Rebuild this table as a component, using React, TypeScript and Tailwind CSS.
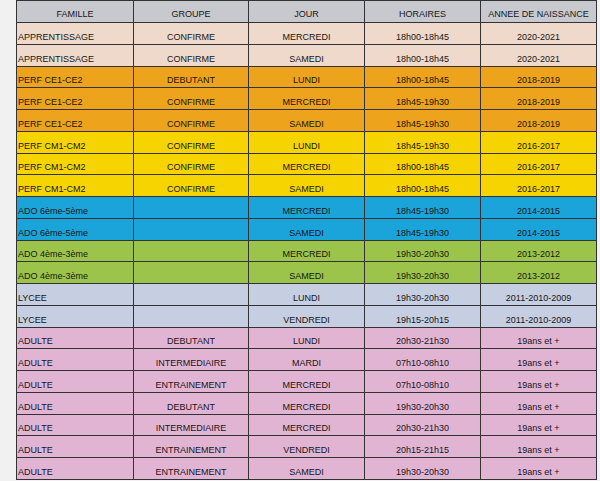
const COLORS: Record<string, string> = {
  peach: 'bg-[#efd9ca]',
  orange: 'bg-[#eea31c]',
  yellow: 'bg-[#f6d402]',
  blue: 'bg-[#1ba4da]',
  green: 'bg-[#9cc44b]',
  lavender: 'bg-[#c6cee1]',
  pink: 'bg-[#e2b4d4]',
}

const ROWS = [
  ['APPRENTISSAGE', 'CONFIRME', 'MERCREDI', '18h00-18h45', '2020-2021', 'peach'],
  ['APPRENTISSAGE', 'CONFIRME', 'SAMEDI', '18h00-18h45', '2020-2021', 'peach'],
  ['PERF CE1-CE2', 'DEBUTANT', 'LUNDI', '18h00-18h45', '2018-2019', 'orange'],
  ['PERF CE1-CE2', 'CONFIRME', 'MERCREDI', '18h45-19h30', '2018-2019', 'orange'],
  ['PERF CE1-CE2', 'CONFIRME', 'SAMEDI', '18h45-19h30', '2018-2019', 'orange'],
  ['PERF CM1-CM2', 'CONFIRME', 'LUNDI', '18h45-19h30', '2016-2017', 'yellow'],
  ['PERF CM1-CM2', 'CONFIRME', 'MERCREDI', '18h00-18h45', '2016-2017', 'yellow'],
  ['PERF CM1-CM2', 'CONFIRME', 'SAMEDI', '18h00-18h45', '2016-2017', 'yellow'],
  ['ADO 6ème-5ème', '', 'MERCREDI', '18h45-19h30', '2014-2015', 'blue'],
  ['ADO 6ème-5ème', '', 'SAMEDI', '18h45-19h30', '2014-2015', 'blue'],
  ['ADO 4ème-3ème', '', 'MERCREDI', '19h30-20h30', '2013-2012', 'green'],
  ['ADO 4ème-3ème', '', 'SAMEDI', '19h30-20h30', '2013-2012', 'green'],
  ['LYCEE', '', 'LUNDI', '19h30-20h30', '2011-2010-2009', 'lavender'],
  ['LYCEE', '', 'VENDREDI', '19h15-20h15', '2011-2010-2009', 'lavender'],
  ['ADULTE', 'DEBUTANT', 'LUNDI', '20h30-21h30', '19ans et +', 'pink'],
  ['ADULTE', 'INTERMEDIAIRE', 'MARDI', '07h10-08h10', '19ans et +', 'pink'],
  ['ADULTE', 'ENTRAINEMENT', 'MERCREDI', '07h10-08h10', '19ans et +', 'pink'],
  ['ADULTE', 'DEBUTANT', 'MERCREDI', '19h30-20h30', '19ans et +', 'pink'],
  ['ADULTE', 'INTERMEDIAIRE', 'MERCREDI', '20h30-21h30', '19ans et +', 'pink'],
  ['ADULTE', 'ENTRAINEMENT', 'VENDREDI', '20h15-21h15', '19ans et +', 'pink'],
  ['ADULTE', 'ENTRAINEMENT', 'SAMEDI', '19h30-20h30', '19ans et +', 'pink'],
]

const HEADERS = ['FAMILLE', 'GROUPE', 'JOUR', 'HORAIRES', 'ANNEE DE NAISSANCE']

const cell = 'border border-[#333335] align-bottom pb-[2px] px-0 leading-none'

export default function App() {
  return (
    <div className="w-[600px] h-[481px] bg-[#f1f1f2] overflow-hidden font-['Liberation_Sans',Arial,sans-serif] text-[9px] text-[#181616]">
      <table className="ml-[16px] w-[580px] table-fixed border-collapse">
        <colgroup>
          <col className="w-[117px]" />
          <col className="w-[115px]" />
          <col className="w-[116px]" />
          <col className="w-[116px]" />
          <col className="w-[116px]" />
        </colgroup>
        <thead>
          <tr className="h-[22px] bg-[#c7c9cf]">
            {HEADERS.map((h) => (
              <th key={h} className={`${cell} font-normal text-center pb-[3px]`}>
                {h}
              </th>
            ))}
          </tr>
        </thead>
        <tbody>
          {ROWS.map(([famille, groupe, jour, horaires, annee, color], i) => (
            <tr key={i} className={`h-[21.75px] ${COLORS[color]}`}>
              <td className={`${cell} text-left pl-[1px]`}>{famille}</td>
              <td className={`${cell} text-center`}>{groupe}</td>
              <td className={`${cell} text-center`}>{jour}</td>
              <td className={`${cell} text-center`}>{horaires}</td>
              <td className={`${cell} text-center`}>{annee}</td>
            </tr>
          ))}
        </tbody>
      </table>
    </div>
  )
}
